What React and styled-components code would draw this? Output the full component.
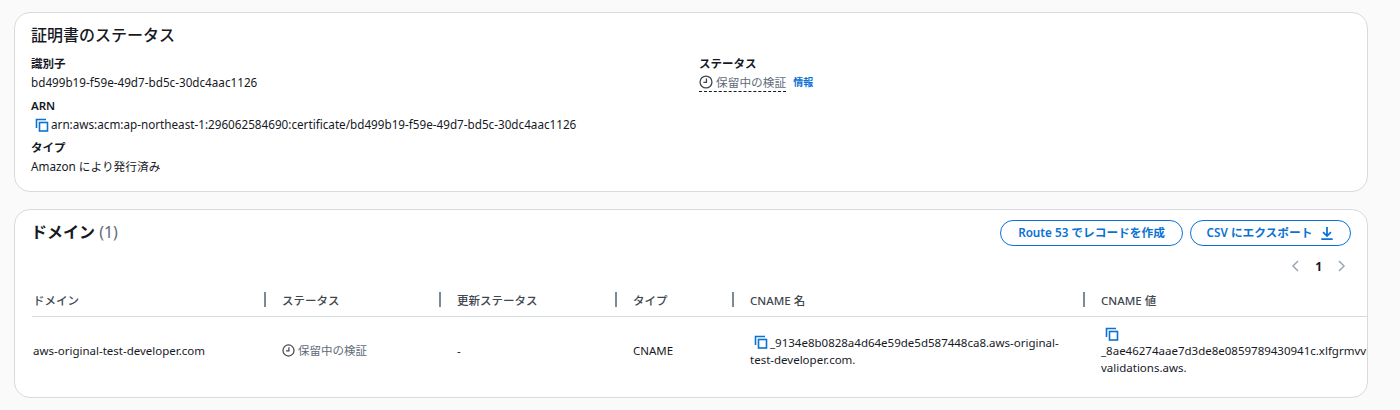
import React from "react";
import styled, { createGlobalStyle } from "styled-components";

const Global = createGlobalStyle`
  html, body { margin: 0; padding: 0; background: #fafafa; }
  body { font-family: "Noto Sans", "Noto Sans CJK JP", sans-serif; color: #16191f; font-size: 12px; }
`;
const Page = styled.div`
  width: 1400px; height: 410px; overflow: hidden; box-sizing: border-box;
  padding: 12px 32px 0 14px; display: flex; flex-direction: column; gap: 17px;
`;
const Panel = styled.section`
  box-sizing: border-box; background: #fff; border: 1px solid #d9dadc; border-radius: 16px;
  height: ${(p) => p.$h}px; overflow: hidden;
`;
const StatusBody = styled.div`
  padding: 11px 16px 0; 
`;
const PanelTitle = styled.h2`
  margin: 0; font-size: 16px; line-height: 22px; font-weight: 500; color: #16191f;
`;
const Columns = styled.div`
  display: grid; grid-template-columns: 668px 1fr; margin-top: 9px;
`;
const Field = styled.div`
  height: 42px;
`;
const Label = styled.div`
  font-size: 11.5px; line-height: 18px; font-weight: 600; color: #16191f;
`;
const Value = styled.div`
  font-size: 11.7px; line-height: 19px; color: #16191f; display: flex; align-items: center; white-space: nowrap;
`;
const Pending = styled.span`
  display: inline-flex; align-items: center; gap: 3px; color: #5f6b7a;
  border-bottom: ${(p) => (p.$dashed ? "1px dashed #16191f" : "none")};
  line-height: 17px;
`;
const Info = styled.span`
  font-size: 10px; font-weight: 600; color: #0972d3; margin-left: 7px;
`;
const Header = styled.div`
  display: flex; justify-content: space-between; padding: 10px 16px 0 16px; height: 26px;
`;
const DomainTitle = styled.h2`
  margin: 0; font-size: 16px; line-height: 24px; font-weight: 600;
  span { font-weight: 400; color: #5f6b7a; }
`;
const Actions = styled.div`
  display: flex; gap: 7px;
`;
const Button = styled.button`
  height: 26px; box-sizing: border-box; border: 1.5px solid #0972d3; border-radius: 13px; background: #fff;
  color: #0972d3; font: 600 11.7px/1 "Noto Sans", "Noto Sans CJK JP", sans-serif;
  display: inline-flex; align-items: center; gap: 8px; padding: 0; justify-content: center;
  width: ${(p) => p.$w}px;
`;
const Pager = styled.div`
  display: flex; justify-content: flex-end; align-items: center; gap: 15px; height: 20px;
  margin-top: 10px; padding-right: 20px; font-size: 12px; font-weight: 700; color: #16191f;
  svg { color: #9ba7b6; }
`;
const Table = styled.div`
  margin: 8px 0 0 17px;
`;
const Row = styled.div`
  display: grid; grid-template-columns: 233px 175px 176px 117px 351px 300px;
`;
const HeadRow = styled(Row)`
  height: 32px; border-bottom: 1px solid #d5dbdb; box-sizing: content-box;
`;
const HeadCell = styled.div`
  display: flex; align-items: center; height: 31px; padding-left: ${(p) => (p.$first ? 1 : 17)}px; font-size: 11.5px; font-weight: 500;
  color: #414750; position: relative;
  &::before {
    content: ""; display: ${(p) => (p.$first ? "none" : "block")}; position: absolute; left: -1px; top: 8px; width: 1.5px; height: 15px; background: #7d8998;
  }
`;
const Cell = styled.div`
  height: 67px; display: flex; align-items: center; padding-left: ${(p) => (p.$first ? 1 : 17)}px; font-size: 11.5px; line-height: 17px; color: #16191f;
  min-width: 0;
`;
const Wrap = styled.div`
  width: ${(p) => p.$w}px;
`;
const Line = styled.div`
  white-space: nowrap; display: flex; align-items: center;
`;

const CopyIcon = styled.svg`
  flex: none; margin: 0 1px 0 3px;
`;
const Copy = () => (
  <CopyIcon width="16" height="16" viewBox="0 0 16 16" fill="none" stroke="#0972d3" strokeWidth="1.6">
    <path d="M2.5 11V2.5H12" />
    <rect x="5.5" y="5.5" width="8" height="8.5" />
  </CopyIcon>
);
const Clock = ({ s = 14 }) => (
  <svg width={s} height={s} viewBox="0 0 16 16" fill="none" stroke="#414750" strokeWidth="1.5">
    <circle cx="8" cy="8" r="6.8" />
    <path d="M8.5 4v4.5H5" />
  </svg>
);
const Download = () => (
  <svg width="14" height="14" viewBox="0 0 16 16" fill="none" stroke="#0972d3" strokeWidth="2">
    <path d="M8 1v10M3.5 7 8 11.5 12.5 7M1.5 15h13" />
  </svg>
);
const Chevron = ({ left }) => (
  <svg width="10" height="14" viewBox="0 0 10 14" fill="none" stroke="currentColor" strokeWidth="1.5">
    <path d={left ? "M8 2 3 7l5 5" : "M2 2l5 5-5 5"} />
  </svg>
);

export default function App() {
  return (
    <Page>
      <Global />
      <Panel $h={180}>
        <StatusBody>
          <PanelTitle>証明書のステータス</PanelTitle>
          <Columns>
            <div>
              <Field>
                <Label>識別子</Label>
                <Value>bd499b19-f59e-49d7-bd5c-30dc4aac1126</Value>
              </Field>
              <Field>
                <Label>ARN</Label>
                <Value><Copy />arn:aws:acm:ap-northeast-1:296062584690:certificate/bd499b19-f59e-49d7-bd5c-30dc4aac1126</Value>
              </Field>
              <Field>
                <Label>タイプ</Label>
                <Value>Amazon により発行済み</Value>
              </Field>
            </div>
            <div>
              <Label>ステータス</Label>
              <Value>
                <Pending $dashed><Clock />保留中の検証</Pending>
                <Info>情報</Info>
              </Value>
            </div>
          </Columns>
        </StatusBody>
      </Panel>
      <Panel $h={189}>
        <Header>
          <DomainTitle>ドメイン <span>(1)</span></DomainTitle>
          <Actions>
            <Button $w={183}>Route 53 でレコードを作成</Button>
            <Button $w={161}>CSV にエクスポート<Download /></Button>
          </Actions>
        </Header>
        <Pager><Chevron left /><span>1</span><Chevron /></Pager>
        <Table>
          <HeadRow>
            <HeadCell $first>ドメイン</HeadCell>
            <HeadCell>ステータス</HeadCell>
            <HeadCell>更新ステータス</HeadCell>
            <HeadCell>タイプ</HeadCell>
            <HeadCell>CNAME 名</HeadCell>
            <HeadCell>CNAME 値</HeadCell>
          </HeadRow>
          <Row>
            <Cell $first>aws-original-test-developer.com</Cell>
            <Cell><Pending><Clock s={13} />保留中の検証</Pending></Cell>
            <Cell>-</Cell>
            <Cell>CNAME</Cell>
            <Cell>
              <Wrap $w={330}>
                <Line><Copy />_9134e8b0828a4d64e59de5d587448ca8.aws-original-</Line>
                <Line>test-developer.com.</Line>
              </Wrap>
            </Cell>
            <Cell>
              <Wrap $w={300}>
                <Line><Copy /></Line>
                <Line>_8ae46274aae7d3de8e0859789430941c.xlfgrmvvlj.acm-</Line>
                <Line>validations.aws.</Line>
              </Wrap>
            </Cell>
          </Row>
        </Table>
      </Panel>
    </Page>
  );
}
